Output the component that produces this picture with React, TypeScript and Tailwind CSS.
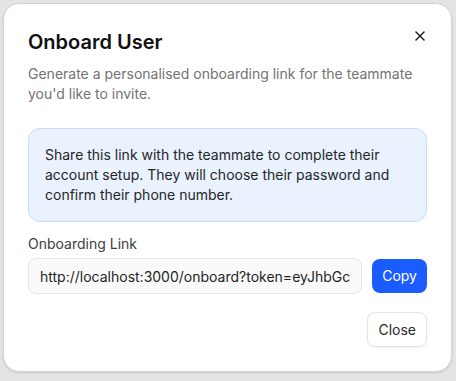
import { X } from 'lucide-react';

const link = 'http://localhost:3000/onboard?token=eyJhbGciOiJIUzI1NiIsInR5cCI6IkpXVCJ9';

export default function App() {
  return (
    <div className="min-h-screen bg-[#e4e4e4] pt-[3px] pl-[3px] font-['Inter',sans-serif]">
      <div className="relative w-[449px] rounded-2xl border border-[#d4d4d4] bg-white p-6 shadow-sm">
        <button className="absolute right-[23px] top-[24px] text-[#1f1f1f]">
          <X className="h-4 w-4" strokeWidth={2.2} />
        </button>

        {/* Header */}
        <h2 className="text-xl leading-7 font-semibold text-[#111111]">Onboard User</h2>
        <p className="mt-2 text-sm leading-5 text-[#737373]">
          Generate a personalised onboarding link for the teammate you'd like to invite.
        </p>

        {/* Info */}
        <div className="mt-6 rounded-xl border border-[#c5dcfb] bg-[#e9f2fe] px-4 py-4 pr-6">
          <p className="text-sm leading-5 text-[#262626]">
            Share this link with the teammate to complete their account setup. They will choose their password and confirm their phone number.
          </p>
        </div>

        {/* Link field */}
        <label className="mt-3 block text-sm leading-5 text-[#404040]">Onboarding Link</label>
        <div className="mt-1 flex items-center gap-2.5">
          <input
            readOnly
            value={link}
            className="h-[36px] min-w-0 flex-1 rounded-lg border border-[#e5e5e5] bg-[#fafafa] px-[11px] text-sm text-[#1f1f1f] outline-none"
          />
          <button className="h-[34px] rounded-lg bg-[#1a5cff] px-2.5 text-sm text-white">
            Copy
          </button>
        </div>

        <div className="mt-[18px] flex justify-end">
          <button className="h-[35px] rounded-lg border border-[#e5e5e5] bg-white px-2.5 text-sm text-[#262626] shadow-xs">
            Close
          </button>
        </div>
      </div>
    </div>
  );
}
